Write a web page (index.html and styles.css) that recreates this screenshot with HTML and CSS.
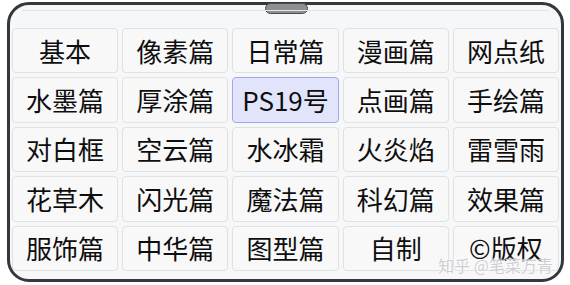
FILE: index.html
```html
<!DOCTYPE html>
<html lang="zh">
<head>
<meta charset="utf-8">
<link rel="stylesheet" href="styles.css">
</head>
<body>
<div class="panel">
  <div class="handle"></div>
  <div class="topline"></div>
  <div class="grid">
    <div class="cell">基本</div>
    <div class="cell">像素篇</div>
    <div class="cell">日常篇</div>
    <div class="cell">漫画篇</div>
    <div class="cell">网点纸</div>
    <div class="cell">水墨篇</div>
    <div class="cell">厚涂篇</div>
    <div class="cell active">PS19号</div>
    <div class="cell">点画篇</div>
    <div class="cell">手绘篇</div>
    <div class="cell">对白框</div>
    <div class="cell">空云篇</div>
    <div class="cell">水冰霜</div>
    <div class="cell">火炎焰</div>
    <div class="cell">雷雪雨</div>
    <div class="cell">花草木</div>
    <div class="cell">闪光篇</div>
    <div class="cell">魔法篇</div>
    <div class="cell">科幻篇</div>
    <div class="cell">效果篇</div>
    <div class="cell">服饰篇</div>
    <div class="cell">中华篇</div>
    <div class="cell">图型篇</div>
    <div class="cell">自制</div>
    <div class="cell">©版权</div>
  </div>
  <div class="watermark">知乎 @笔菜万青</div>
</div>
</body>
</html>
```

FILE: styles.css
```css
html, body {
  margin: 0;
  padding: 0;
  background: #ffffff;
}
body {
  font-family: "Noto Sans CJK SC", "Noto Sans", sans-serif;
}
.panel {
  position: relative;
  box-sizing: border-box;
  margin: 2px 0 0 7px;
  width: 557px;
  height: 280px;
  border: 3px solid #34383c;
  border-radius: 22px;
  background: #f6f7f8;
  padding: 23px 2px 8px 2px;
}
.handle {
  position: absolute;
  left: 255px;
  top: -2px;
  width: 41px;
  height: 9px;
  background: #8e9194;
  border: 1.5px solid #4b4e51;
  border-radius: 6px;
}
.topline {
  position: absolute;
  left: 12px;
  right: 12px;
  top: 5px;
  height: 1px;
  background: #e4e5e7;
}
.grid {
  display: grid;
  grid-template-columns: repeat(5, 1fr);
  grid-template-rows: repeat(5, 1fr);
  gap: 4px;
  height: 100%;
}
.cell {
  display: flex;
  align-items: center;
  justify-content: center;
  box-sizing: border-box;
  background: #f8f8f9;
  border: 1px solid #e0e1e3;
  border-radius: 4px;
  font-size: 26px;
  color: #0e0e0e;
  line-height: 1;
}
.cell.active {
  background: #e1e4fb;
  border-color: #a3a6e8;
}
.watermark {
  position: absolute;
  right: 8px;
  bottom: 6px;
  font-size: 16px;
  line-height: 1;
  color: rgba(196, 197, 202, 0.85);
  text-shadow: 0 0 1px #fff, 0 0 2px #fff;
}
```
